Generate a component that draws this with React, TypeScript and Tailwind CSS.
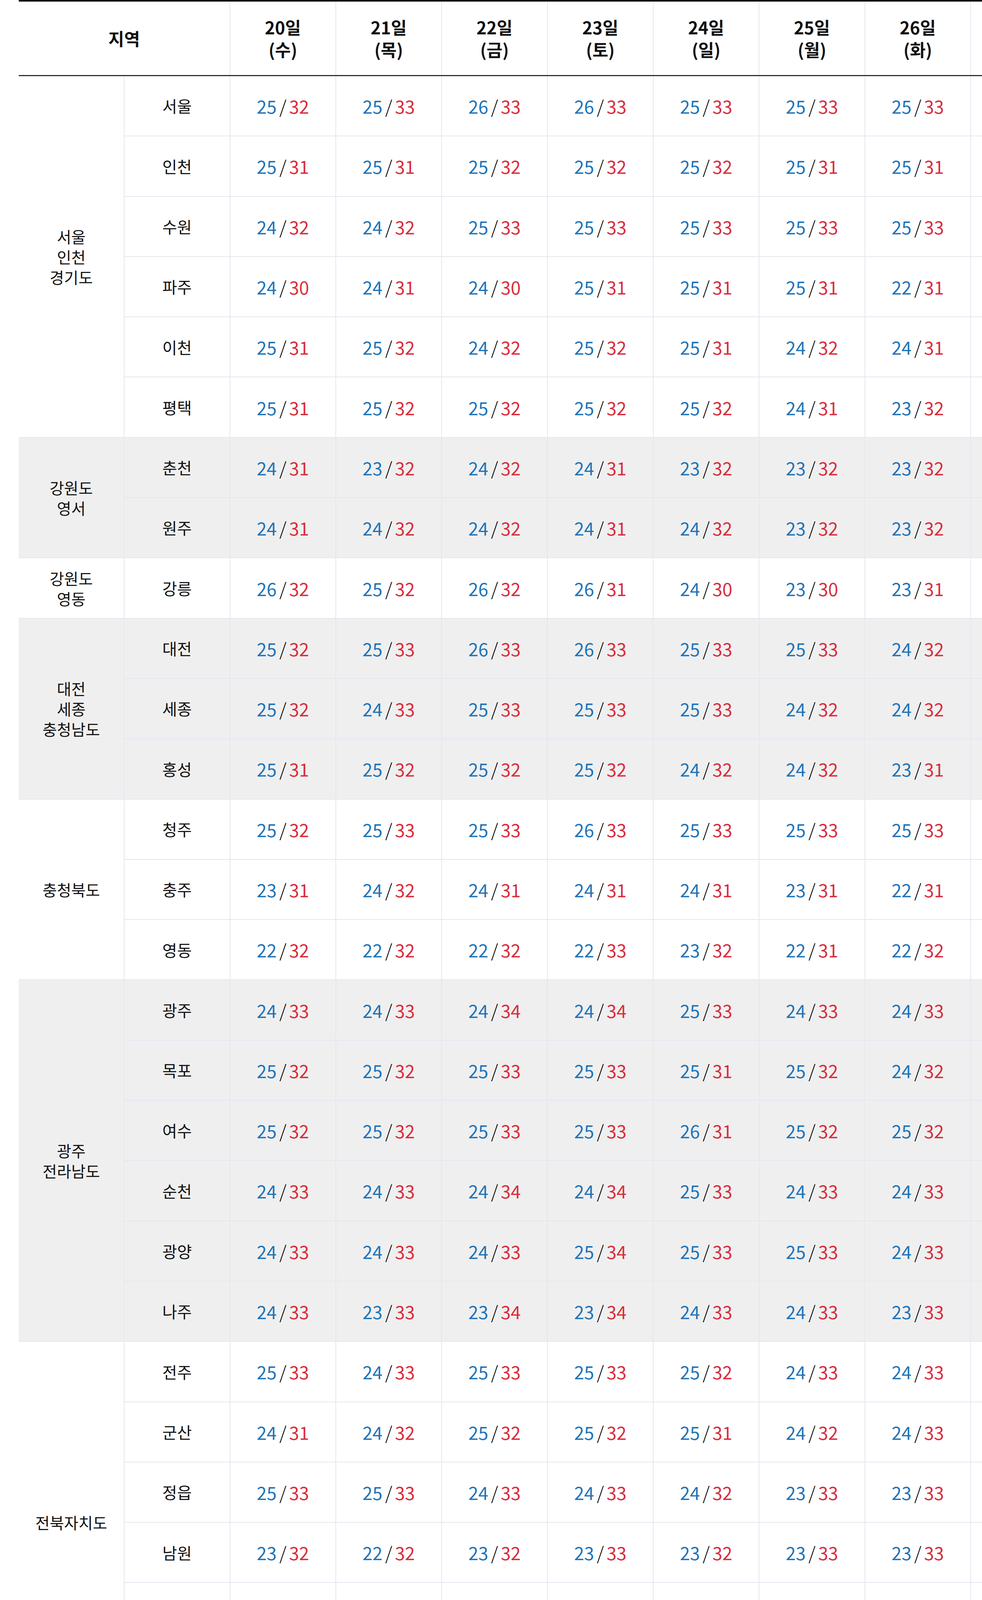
import React from "react";

type City = { name: string; t: [number, number][] };
type Group = { region: string[]; gray: boolean; cities: City[] };

const p = (s: string): [number, number][] =>
  s.split(" ").map((x) => {
    const [a, b] = x.split("/");
    return [Number(a), Number(b)] as [number, number];
  });

const groups: Group[] = [
  {
    region: ["서울", "인천", "경기도"],
    gray: false,
    cities: [
      { name: "서울", t: p("25/32 25/33 26/33 26/33 25/33 25/33 25/33") },
      { name: "인천", t: p("25/31 25/31 25/32 25/32 25/32 25/31 25/31") },
      { name: "수원", t: p("24/32 24/32 25/33 25/33 25/33 25/33 25/33") },
      { name: "파주", t: p("24/30 24/31 24/30 25/31 25/31 25/31 22/31") },
      { name: "이천", t: p("25/31 25/32 24/32 25/32 25/31 24/32 24/31") },
      { name: "평택", t: p("25/31 25/32 25/32 25/32 25/32 24/31 23/32") },
    ],
  },
  {
    region: ["강원도", "영서"],
    gray: true,
    cities: [
      { name: "춘천", t: p("24/31 23/32 24/32 24/31 23/32 23/32 23/32") },
      { name: "원주", t: p("24/31 24/32 24/32 24/31 24/32 23/32 23/32") },
    ],
  },
  {
    region: ["강원도", "영동"],
    gray: false,
    cities: [{ name: "강릉", t: p("26/32 25/32 26/32 26/31 24/30 23/30 23/31") }],
  },
  {
    region: ["대전", "세종", "충청남도"],
    gray: true,
    cities: [
      { name: "대전", t: p("25/32 25/33 26/33 26/33 25/33 25/33 24/32") },
      { name: "세종", t: p("25/32 24/33 25/33 25/33 25/33 24/32 24/32") },
      { name: "홍성", t: p("25/31 25/32 25/32 25/32 24/32 24/32 23/31") },
    ],
  },
  {
    region: ["충청북도"],
    gray: false,
    cities: [
      { name: "청주", t: p("25/32 25/33 25/33 26/33 25/33 25/33 25/33") },
      { name: "충주", t: p("23/31 24/32 24/31 24/31 24/31 23/31 22/31") },
      { name: "영동", t: p("22/32 22/32 22/32 22/33 23/32 22/31 22/32") },
    ],
  },
  {
    region: ["광주", "전라남도"],
    gray: true,
    cities: [
      { name: "광주", t: p("24/33 24/33 24/34 24/34 25/33 24/33 24/33") },
      { name: "목포", t: p("25/32 25/32 25/33 25/33 25/31 25/32 24/32") },
      { name: "여수", t: p("25/32 25/32 25/33 25/33 26/31 25/32 25/32") },
      { name: "순천", t: p("24/33 24/33 24/34 24/34 25/33 24/33 24/33") },
      { name: "광양", t: p("24/33 24/33 24/33 25/34 25/33 25/33 24/33") },
      { name: "나주", t: p("24/33 23/33 23/34 23/34 24/33 24/33 23/33") },
    ],
  },
  {
    region: ["전북자치도"],
    gray: false,
    cities: [
      { name: "전주", t: p("25/33 24/33 25/33 25/33 25/32 24/33 24/33") },
      { name: "군산", t: p("24/31 24/32 25/32 25/32 25/31 24/32 24/33") },
      { name: "정읍", t: p("25/33 25/33 24/33 24/33 24/32 23/33 23/33") },
      { name: "남원", t: p("23/32 22/32 23/32 23/33 23/32 23/33 23/33") },
      { name: "고창", t: p("25/33 25/33 25/32 24/33 24/32 23/32 23/32") },
      { name: "무주", t: p("22/32 21/32 22/31 22/32 22/31 21/33 21/32") },
    ],
  },
  {
    region: ["부산", "울산", "경상남도"],
    gray: true,
    cities: [
      { name: "부산", t: p("25/32 25/32 26/33 26/33 25/32 25/31 25/31") },
      { name: "울산", t: p("24/33 24/33 25/34 25/34 24/33 24/32 24/32") },
      { name: "창원", t: p("25/33 25/33 26/34 26/34 25/33 24/33 24/33") },
      { name: "진주", t: p("23/33 23/33 23/33 24/34 23/33 22/32 22/32") },
      { name: "거창", t: p("21/33 21/33 22/34 22/34 22/33 21/32 21/32") },
      { name: "통영", t: p("25/32 25/32 25/32 26/33 25/32 24/31 24/31") },
    ],
  },
  {
    region: ["대구", "경상북도"],
    gray: false,
    cities: [
      { name: "대구", t: p("25/34 25/35 25/35 25/35 25/33 25/33 24/33") },
      { name: "안동", t: p("24/34 24/34 24/34 25/34 24/33 24/33 22/32") },
      { name: "포항", t: p("25/34 25/34 26/34 26/34 25/32 25/31 24/30") },
      { name: "경주", t: p("24/34 24/35 24/35 25/35 25/33 24/32 23/32") },
      { name: "울진", t: p("25/32 24/31 25/32 25/31 24/29 23/29 22/29") },
      { name: "울릉도", t: p("26/30 25/30 25/31 26/30 25/29 24/28 23/28") },
    ],
  },
  {
    region: ["제주도"],
    gray: true,
    cities: [
      { name: "제주", t: p("26/33 26/33 27/32 27/33 26/32 26/32 26/32") },
      { name: "서귀포", t: p("27/33 26/32 26/32 27/32 26/31 27/32 26/31") },
    ],
  },
];

const days = [
  ["20일", "(수)"],
  ["21일", "(목)"],
  ["22일", "(금)"],
  ["23일", "(토)"],
  ["24일", "(일)"],
  ["25일", "(월)"],
  ["26일", "(화)"],
];

const font = { fontFamily: '"Noto Sans CJK KR", "Noto Sans", sans-serif' };

export default function App() {
  return (
    <div className="w-[2515px] overflow-hidden bg-white text-[#111]" style={font}>
      <div className="pl-[48px]">
        <div className="w-max">
          {/* Header */}
          <div className="flex border-t-4 border-b-[3px] border-t-black border-b-[#333]">
            <div className="flex h-[188px] w-[542px] items-center justify-center border-r-2 border-[#e3e8f0] text-[44px] font-bold leading-[57px]">
              지역
            </div>
            {days.map(([d, w]) => (
              <div
                key={d}
                className="flex h-[188px] w-[271px] flex-col items-center justify-center border-r-2 border-[#e3e8f0] text-[44px] font-bold leading-[57px]"
              >
                <span>{d}</span>
                <span>{w}</span>
              </div>
            ))}
            <div className="h-[188px] w-[271px] border-r-2 border-[#e3e8f0]" />
          </div>
          {/* Body */}
          {groups.map((g, gi) => (
            <div key={gi} className={`flex ${g.gray ? "bg-[#efefef]" : "bg-white"}`}>
              <div className="flex w-[271px] flex-col items-center justify-center border-r-2 border-b-2 border-[#e3e8f0] text-[40px] leading-[52px]">
                {g.region.map((r, ri) => (
                  <span key={ri}>{r}</span>
                ))}
              </div>
              <div className="flex flex-col">
                {g.cities.map((c) => (
                  <div key={c.name} className="flex h-[154.3px]">
                    <div className="flex w-[271px] items-center justify-center border-r-2 border-b-2 border-[#e3e8f0] text-[41px]">
                      {c.name}
                    </div>
                    {c.t.map(([lo, hi], i) => (
                      <div
                        key={i}
                        className="flex w-[271px] items-center justify-center border-r-2 border-b-2 border-[#e3e8f0] text-[46px] leading-none"
                      >
                        <span className="text-[#1f74b8]">{lo}</span>
                        <span className="mx-[7px] font-light text-black">/</span>
                        <span className="text-[#d92d3b]">{hi}</span>
                      </div>
                    ))}
                    <div className="w-[271px] border-r-2 border-b-2 border-[#e3e8f0]" />
                  </div>
                ))}
              </div>
            </div>
          ))}
        </div>
      </div>
    </div>
  );
}
